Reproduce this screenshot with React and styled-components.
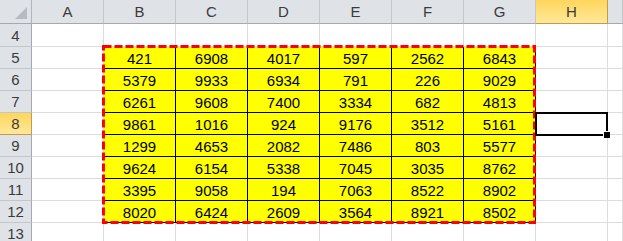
import styled, { createGlobalStyle } from "styled-components";

const GlobalStyle = createGlobalStyle`
    html, body {
        margin: 0;
        padding: 0;
        background: #ffffff;
        overflow: hidden;
    }
    body {
        font-family: "Liberation Sans", Arial, sans-serif;
    }
`;

// last column (I) only shows a sliver at the right edge, no label visible
const COLUMNS = ["A", "B", "C", "D", "E", "F", "G", "H", ""];
const ROWS = [4, 5, 6, 7, 8, 9, 10, 11, 12, 13];

const DATA = [
    [421, 6908, 4017, 597, 2562, 6843],
    [5379, 9933, 6934, 791, 226, 9029],
    [6261, 9608, 7400, 3334, 682, 4813],
    [9861, 1016, 924, 9176, 3512, 5161],
    [1299, 4653, 2082, 7486, 803, 5577],
    [9624, 6154, 5338, 7045, 3035, 8762],
    [3395, 9058, 194, 7063, 8522, 8902],
    [8020, 6424, 2609, 3564, 8921, 8502],
];

const ACTIVE_COL = "H";
const ACTIVE_ROW = 8;

const Sheet = styled.div`
    display: grid;
    grid-template-columns: 32px repeat(8, 72px) 1fr;
    grid-template-rows: 24px 23px repeat(9, 22px);
    width: 623px;
    height: 241px;
    overflow: hidden;
    font-size: 15px;
    color: #000;
`;

const Corner = styled.div`
    position: relative;
    box-sizing: border-box;
    background: #dfe3e8;
    border-right: 1px solid #b0b5bb;
    border-bottom: 1px solid #a4a9af;

    &::after {
        content: "";
        position: absolute;
        right: 4px;
        bottom: 4px;
        width: 0;
        height: 0;
        border-left: 12px solid transparent;
        border-bottom: 12px solid #b6bbc1;
    }
`;

const ColHead = styled.div`
    box-sizing: border-box;
    display: flex;
    align-items: center;
    justify-content: center;
    background: ${p => p.$active ? "linear-gradient(#ffd65c, #ffe89a)" : "#dfe3e8"};
    border-right: 1px solid ${p => p.$active ? "#c59a4a" : "#c3c7cc"};
    border-bottom: 1px solid ${p => p.$active ? "#c59a4a" : "#a4a9af"};
    color: #3b3b3b;
    font-size: 15px;
`;

const RowHead = styled.div`
    box-sizing: border-box;
    display: flex;
    align-items: center;
    justify-content: center;
    background: ${p => p.$active ? "linear-gradient(#ffd65c, #ffe89a)" : "#dfe3e8"};
    border-right: 1px solid ${p => p.$active ? "#c59a4a" : "#a4a9af"};
    border-bottom: 1px solid ${p => p.$active ? "#c59a4a" : "#c3c7cc"};
    color: #3b3b3b;
    font-size: 15px;
`;

const Cell = styled.div`
    position: relative;
    box-sizing: border-box;
    border-right: 1px solid #dadcdd;
    border-bottom: 1px solid #dadcdd;
    background: #fff;
`;

const Selection = styled.div`
    position: absolute;
    left: -1px;
    top: -1px;
    width: 73px;
    height: 24px;
    box-sizing: border-box;
    border: 2px solid #000;
    z-index: 2;

    &::after {
        content: "";
        position: absolute;
        right: -4px;
        bottom: -4px;
        width: 6px;
        height: 6px;
        background: #000;
        border: 1px solid #fff;
        border-right: none;
        border-bottom: none;
    }
`;

const Range = styled.div`
    position: relative;
    grid-column: 3 / 9;
    grid-row: 3 / 11;
    display: grid;
    grid-template-columns: repeat(6, 72px);
    grid-template-rows: repeat(8, 22px);
`;

const DataCell = styled.div`
    box-sizing: border-box;
    display: flex;
    align-items: center;
    justify-content: center;
    background: #ffff00;
    border-right: 1px solid #000;
    border-bottom: 1px solid #000;
    padding-top: 1px;
`;

const Ants = styled.svg`
    position: absolute;
    left: -2px;
    top: -2px;
    width: 436px;
    height: 180px;
    pointer-events: none;
    z-index: 1;
`;

function App() {
    const inRange = (r, c) => r >= 5 && r <= 12 && c >= 1 && c <= 6;

    return (
        <>
            <GlobalStyle />
            <Sheet>
                <Range>
                    {DATA.flatMap((row, i) =>
                        row.map((v, j) => <DataCell key={`${i}-${j}`}>{v}</DataCell>)
                    )}
                    <Ants viewBox="0 0 436 180">
                        <rect x="1.5" y="1.5" width="431" height="176" fill="none"
                            stroke="#ff0000" strokeWidth="3" strokeDasharray="8 3" />
                    </Ants>
                </Range>

                <Corner />
                {COLUMNS.map((c, i) => (
                    <ColHead key={i} $active={c === ACTIVE_COL}>{c}</ColHead>
                ))}

                {ROWS.map(r => (
                    [
                        <RowHead key={`h${r}`} $active={r === ACTIVE_ROW}>{r}</RowHead>,
                        ...COLUMNS.map((c, ci) => {
                            if (inRange(r, ci)) return null;
                            return (
                                <Cell key={`${ci}-${r}`}>
                                    {r === ACTIVE_ROW && c === ACTIVE_COL && <Selection />}
                                </Cell>
                            );
                        }),
                    ]
                ))}
            </Sheet>
        </>
    );
}

export default App;
